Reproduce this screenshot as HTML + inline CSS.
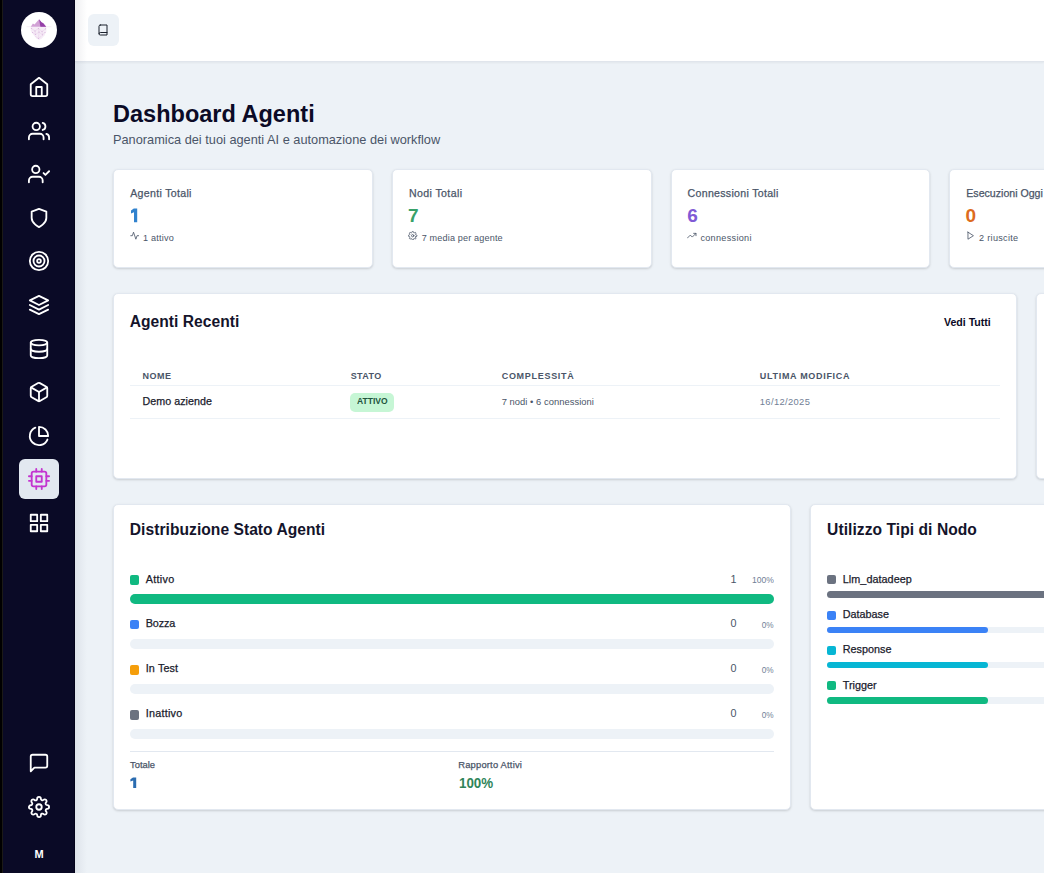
<!DOCTYPE html>
<html><head><meta charset="utf-8"><title>Dashboard Agenti</title>
<style>
html,body{margin:0;padding:0;}
body{width:1044px;height:873px;overflow:hidden;position:relative;background:#edf2f7;font-family:"Liberation Sans",sans-serif;}
.t{position:absolute;line-height:1;white-space:nowrap;}
.med{-webkit-text-stroke:0.25px currentColor;}
.abs{position:absolute;}
.side{position:absolute;left:0;top:0;width:75px;height:873px;background:#0a0a26;box-sizing:border-box;border-right:1px solid #04031a;z-index:2;}
.sshadow{position:absolute;left:75px;top:0;width:12px;height:873px;background:linear-gradient(to right,rgba(30,40,70,0.07),rgba(30,40,70,0));z-index:3;}
.strip{z-index:2;position:absolute;left:0;top:0;width:2px;height:873px;background:#000;}
.strip2{z-index:2;position:absolute;left:2px;top:0;width:1.3px;height:873px;background:#1b1a17;}
.ico{z-index:4;position:absolute;width:22px;height:22px;}
.ico svg{width:22px;height:22px;display:block;fill:none;stroke:#fff;stroke-width:2;stroke-linecap:round;stroke-linejoin:round;}
.logo{z-index:4;position:absolute;left:21px;top:12px;width:36px;height:36px;border-radius:50%;background:#fff;}
.active{z-index:3;position:absolute;left:19.1px;top:458.9px;width:40px;height:40px;border-radius:6px;background:#e2e8f0;}
.header{position:absolute;left:75px;top:0;width:969px;height:61px;background:#fff;border-bottom:1px solid #e0e5ec;box-shadow:0 1px 2px rgba(0,0,0,0.05);}
.hbtn{position:absolute;left:88px;top:14.2px;width:31px;height:31.5px;border-radius:6px;background:#edf2f7;}
.card{position:absolute;box-sizing:border-box;background:#fff;border-radius:5px;border:1px solid #e2e8f0;box-shadow:0 1px 3px rgba(0,0,0,0.1),0 1px 2px rgba(0,0,0,0.06);}
.line{position:absolute;height:1px;background:#edf2f7;}
.bar{position:absolute;border-radius:6px;background:#edf2f7;}
.fill{position:absolute;left:0;top:0;bottom:0;border-radius:6px;}
.sq{position:absolute;width:9.2px;height:9.6px;border-radius:2px;}
.sico{position:absolute;width:9.4px;height:9.4px;}
.sico svg{width:9.4px;height:9.4px;display:block;fill:none;stroke:#4a5568;stroke-width:2.1;stroke-linecap:round;stroke-linejoin:round;}
.badge{position:absolute;left:350px;top:393px;width:44px;height:18.8px;border-radius:5px;background:#c6f6d5;}
</style></head><body>
<div class="side"></div>
<div class="strip"></div><div class="strip2"></div>
<div class="logo">
 <svg width="36" height="36" viewBox="0 0 36 36">
  <line x1="5.5" y1="14.7" x2="30.5" y2="14.7" stroke="#efdcef" stroke-width="0.5"/>
  <polygon points="9.8,14.7 11.9,11.6 13.5,12.6 18.1,7.3 20.5,10.2 22.3,11.2 25.2,14.7" fill="#d2a2d6"/>
  <polygon points="18.1,7.3 20.5,10.2 22.3,11.2 25.2,14.7 19.4,14.7" fill="#9540a8"/>
  <polygon points="9.6,15.1 25.4,15.1 25.4,19.5 23.5,23.5 20.5,26.8 18.2,28 15.5,26.5 12.5,23 9.8,19" fill="#f6ecf7"/>
  <g stroke="#e2c6e5" stroke-width="0.45" fill="none"><path d="M10.5 16.5 L14 19 L17.5 16.5 L21 19.5 L24.5 16.8"/><path d="M11.5 20.5 L14.5 22.5 L18 20 L21.5 22.8 L24 20.5"/><path d="M14 24 L17.5 26.5 L20.5 24"/><path d="M14 19 L14.5 22.5 M17.5 16.5 L18 20 M21 19.5 L21.5 22.8 M17.5 26.5 L18 20"/></g>
  <g fill="#d9b6dd"><circle cx="14" cy="19" r="0.6"/><circle cx="17.5" cy="16.5" r="0.6"/><circle cx="21" cy="19.5" r="0.6"/><circle cx="24.5" cy="16.8" r="0.6"/><circle cx="10.5" cy="16.5" r="0.6"/><circle cx="14.5" cy="22.5" r="0.6"/><circle cx="18" cy="20" r="0.6"/><circle cx="21.5" cy="22.8" r="0.6"/><circle cx="17.5" cy="26.5" r="0.6"/><circle cx="11.5" cy="20.5" r="0.6"/><circle cx="24" cy="20.5" r="0.6"/></g>
 </svg>
</div>
<div class="ico" style="left:27.9px;top:75.70px"><svg viewBox="0 0 24 24"><path d="M3 9l9-7 9 7v11a2 2 0 0 1-2 2H5a2 2 0 0 1-2-2z"/><polyline points="9 22 9 12 15 12 15 22"/></svg></div>
<div class="ico" style="left:27.9px;top:119.75px"><svg viewBox="0 0 24 24"><path d="M17 21v-2a4 4 0 0 0-4-4H5a4 4 0 0 0-4 4v2"/><circle cx="9" cy="7" r="4"/><path d="M23 21v-2a4 4 0 0 0-3-3.87"/><path d="M16 3.13a4 4 0 0 1 0 7.75"/></svg></div>
<div class="ico" style="left:27.9px;top:162.75px"><svg viewBox="0 0 24 24"><path d="M16 21v-2a4 4 0 0 0-4-4H5a4 4 0 0 0-4 4v2"/><circle cx="8.5" cy="7" r="4"/><polyline points="17 11 19 13 23 9"/></svg></div>
<div class="ico" style="left:27.9px;top:206.80px"><svg viewBox="0 0 24 24"><path d="M12 22s8-4 8-10V5l-8-3-8 3v7c0 6 8 10 8 10z"/></svg></div>
<div class="ico" style="left:27.9px;top:249.80px"><svg viewBox="0 0 24 24"><circle cx="12" cy="12" r="10"/><circle cx="12" cy="12" r="6"/><circle cx="12" cy="12" r="2"/></svg></div>
<div class="ico" style="left:27.9px;top:293.70px"><svg viewBox="0 0 24 24"><polygon points="12 2 2 7 12 12 22 7 12 2"/><polyline points="2 17 12 22 22 17"/><polyline points="2 12 12 17 22 12"/></svg></div>
<div class="ico" style="left:27.9px;top:337.80px"><svg viewBox="0 0 24 24"><ellipse cx="12" cy="5" rx="9" ry="3"/><path d="M21 12c0 1.66-4 3-9 3s-9-1.34-9-3"/><path d="M3 5v14c0 1.66 4 3 9 3s9-1.34 9-3V5"/></svg></div>
<div class="ico" style="left:27.9px;top:380.80px"><svg viewBox="0 0 24 24"><path d="M21 16V8a2 2 0 0 0-1-1.73l-7-4a2 2 0 0 0-2 0l-7 4A2 2 0 0 0 3 8v8a2 2 0 0 0 1 1.73l7 4a2 2 0 0 0 2 0l7-4A2 2 0 0 0 21 16z"/><polyline points="3.27 6.96 12 12.01 20.73 6.96"/><line x1="12" y1="22.08" x2="12" y2="12"/></svg></div>
<div class="ico" style="left:27.9px;top:424.90px"><svg viewBox="0 0 24 24"><path d="M21.21 15.89A10 10 0 1 1 8 2.83"/><path d="M22 12A10 10 0 0 0 12 2v10z"/></svg></div>
<div class="active"></div>
<div class="ico" style="left:27.9px;top:467.70px"><svg viewBox="0 0 24 24" style="stroke:#c335d0"><rect x="4" y="4" width="16" height="16" rx="2" ry="2"/><rect x="9" y="9" width="6" height="6"/><line x1="9" y1="1" x2="9" y2="4"/><line x1="15" y1="1" x2="15" y2="4"/><line x1="9" y1="20" x2="9" y2="23"/><line x1="15" y1="20" x2="15" y2="23"/><line x1="20" y1="9" x2="23" y2="9"/><line x1="20" y1="14" x2="23" y2="14"/><line x1="1" y1="9" x2="4" y2="9"/><line x1="1" y1="14" x2="4" y2="14"/></svg></div>
<div class="ico" style="left:27.9px;top:511.80px"><svg viewBox="0 0 24 24"><rect x="3" y="3" width="7" height="7"/><rect x="14" y="3" width="7" height="7"/><rect x="14" y="14" width="7" height="7"/><rect x="3" y="14" width="7" height="7"/></svg></div>
<div class="ico" style="left:27.9px;top:751.70px"><svg viewBox="0 0 24 24"><path d="M21 15a2 2 0 0 1-2 2H7l-4 4V5a2 2 0 0 1 2-2h14a2 2 0 0 1 2 2z"/></svg></div>
<div class="ico" style="left:27.9px;top:795.90px"><svg viewBox="0 0 24 24"><circle cx="12" cy="12" r="3"/><path d="M19.4 15a1.65 1.65 0 0 0 .33 1.82l.06.06a2 2 0 0 1 0 2.83 2 2 0 0 1-2.83 0l-.06-.06a1.65 1.65 0 0 0-1.82-.33 1.65 1.65 0 0 0-1 1.51V21a2 2 0 0 1-2 2 2 2 0 0 1-2-2v-.09A1.65 1.65 0 0 0 9 19.4a1.65 1.65 0 0 0-1.820.33l-.06.06a2 2 0 0 1-2.83 0 2 2 0 0 1 0-2.83l.06-.06a1.65 1.65 0 0 0 .33-1.82 1.65 1.65 0 0 0-1.51-1H3a2 2 0 0 1-2-2 2 2 0 0 1 2-2h.09A1.65 1.65 0 0 0 4.6 9a1.65 1.65 0 0 0-.33-1.82l-.06-.06a2 2 0 0 1 0-2.830 2 2 0 0 1 2.83 0l.06.06a1.65 1.65 0 0 0 1.82.33H9a1.65 1.65 0 0 0 1-1.51V3a2 2 0 0 1 2-2 2 2 0 0 1 2 2v.09a1.65 1.65 0 0 0 1 1.51 1.65 1.65 0 0 0 1.82-.33l.06-.06a2 2 0 0 1 2.83 0 2 2 0 0 1 0 2.83l-.06.06a1.65 1.65 0 0 0-.33 1.82V9a1.65 1.65 0 0 0 1.51 1H21a2 2 0 0 1 2 2 2 2 0 0 1-2 2h-.09a1.65 1.65 0 0 0-1.51 1z"/></svg></div>
<div class="t" style="z-index:4;left:34.5px;top:848.5px;font-size:11px;font-weight:700;color:#fff;">M</div>

<div class="header"></div>
<div class="hbtn"><svg class="abs" style="left:8.6px;top:9.5px" width="12" height="12" viewBox="0 0 24 24" fill="none" stroke="#1a202c" stroke-width="2" stroke-linecap="round" stroke-linejoin="round"><path d="M4 19.5A2.5 2.5 0 0 1 6.5 17H20"/><path d="M6.5 2H20v20H6.5A2.5 2.5 0 0 1 4 19.5v-15A2.5 2.5 0 0 1 6.5 2z"/></svg></div>

<div class="sshadow"></div>
<!-- stat cards -->
<div class="card" style="left:113.3px;top:169.4px;width:259.4px;height:98.4px"></div>
<div class="card" style="left:392.0px;top:169.4px;width:260.4px;height:98.4px"></div>
<div class="card" style="left:670.7px;top:169.4px;width:259.2px;height:98.4px"></div>
<div class="card" style="left:949.4px;top:169.4px;width:259.4px;height:98.4px"></div>
<div class="sico" style="left:129.8px;top:231.2px"><svg viewBox="0 0 24 24"><polyline points="22 12 18 12 15 21 9 3 6 12 2 12"/></svg></div>
<div class="sico" style="left:408.3px;top:230.6px"><svg viewBox="0 0 24 24"><circle cx="12" cy="12" r="3"/><path d="M19.4 15a1.65 1.65 0 0 0 .33 1.82l.06.06a2 2 0 0 1 0 2.83 2 2 0 0 1-2.83 0l-.06-.06a1.65 1.65 0 0 0-1.82-.33 1.65 1.65 0 0 0-1 1.51V21a2 2 0 0 1-2 2 2 2 0 0 1-2-2v-.09A1.65 1.65 0 0 0 9 19.4a1.65 1.65 0 0 0-1.820.33l-.06.06a2 2 0 0 1-2.83 0 2 2 0 0 1 0-2.83l.06-.06a1.65 1.65 0 0 0 .33-1.82 1.65 1.65 0 0 0-1.51-1H3a2 2 0 0 1-2-2 2 2 0 0 1 2-2h.09A1.65 1.65 0 0 0 4.6 9a1.65 1.65 0 0 0-.33-1.82l-.06-.06a2 2 0 0 1 0-2.830 2 2 0 0 1 2.83 0l.06.06a1.65 1.65 0 0 0 1.82.33H9a1.65 1.65 0 0 0 1-1.51V3a2 2 0 0 1 2-2 2 2 0 0 1 2 2v.09a1.65 1.65 0 0 0 1 1.51 1.65 1.65 0 0 0 1.82-.33l.06-.06a2 2 0 0 1 2.83 0 2 2 0 0 1 0 2.83l-.06.06a1.65 1.65 0 0 0-.33 1.82V9a1.65 1.65 0 0 0 1.51 1H21a2 2 0 0 1 2 2 2 2 0 0 1-2 2h-.09a1.65 1.65 0 0 0-1.51 1z"/></svg></div>
<div class="sico" style="left:687.4px;top:231px"><svg viewBox="0 0 24 24"><polyline points="23 6 13.5 15.5 8.5 10.5 1 18"/><polyline points="17 6 23 6 23 12"/></svg></div>
<div class="sico" style="left:966.2px;top:231.2px"><svg viewBox="0 0 24 24"><polygon points="5 3 19 12 5 21 5 3"/></svg></div>

<!-- recent agents -->
<div class="card" style="left:113.3px;top:293.2px;width:903.6px;height:185.6px"></div>
<div class="card" style="left:1036.2px;top:293.4px;width:300px;height:185.2px"></div>
<div class="line" style="left:130px;top:385px;width:869.8px"></div>
<div class="line" style="left:130px;top:418px;width:869.8px"></div>
<div class="badge"></div>

<!-- distribution -->
<div class="card" style="left:113.3px;top:504.2px;width:677.6px;height:305.8px"></div>
<div class="card" style="left:809.8px;top:504.2px;width:400px;height:305.8px"></div>
<div class="sq" style="left:129.9px;top:575px;background:#10b981"></div>
<div class="bar" style="left:130px;top:594.1px;width:644.1px;height:9.9px"><div class="fill" style="width:100%;background:#10b981"></div></div>
<div class="sq" style="left:129.9px;top:619.9px;background:#3b82f6"></div>
<div class="bar" style="left:130px;top:639px;width:644.1px;height:9.9px"></div>
<div class="sq" style="left:129.9px;top:665px;background:#f59e0b"></div>
<div class="bar" style="left:130px;top:684px;width:644.1px;height:9.9px"></div>
<div class="sq" style="left:129.9px;top:710.2px;background:#6b7280"></div>
<div class="bar" style="left:130px;top:729.1px;width:644.1px;height:9.9px"></div>
<div class="line" style="left:130px;top:751px;width:644.1px;background:#e2e8f0"></div>

<!-- node usage -->
<div class="sq" style="left:827.3px;top:575.2px;width:8.6px;height:9.2px;background:#6b7280"></div>
<div class="bar" style="left:827.3px;top:591.1px;width:400px;height:6.9px"><div class="fill" style="width:100%;background:#6b7280"></div></div>
<div class="sq" style="left:827.3px;top:611px;width:8.6px;height:8.8px;background:#3b82f6"></div>
<div class="bar" style="left:827.3px;top:626.9px;width:400px;height:6.2px"><div class="fill" style="width:160.8px;background:#3b82f6"></div></div>
<div class="sq" style="left:827.3px;top:646px;width:8.6px;height:8.8px;background:#06b6d4"></div>
<div class="bar" style="left:827.3px;top:662px;width:400px;height:6.2px"><div class="fill" style="width:160.8px;background:#06b6d4"></div></div>
<div class="sq" style="left:827.3px;top:681px;width:8.6px;height:9.2px;background:#10b981"></div>
<div class="bar" style="left:827.3px;top:697.2px;width:400px;height:6.6px"><div class="fill" style="width:160.8px;background:#10b981"></div></div>

<svg class="abs" style="left:0;top:0" width="1044" height="873" viewBox="0 0 1044 873">
<polygon fill="#3182ce" points="133.8,208.6 137.2,208.6 137.2,222.2 134.0,222.2 134.0,212.2 131.0,213.4 131.0,210.6"/>
<polygon fill="#2b6cb0" points="133.0,777.6 136.2,777.6 136.2,788.1 133.2,788.1 133.2,780.6 130.4,781.6 130.4,779.3"/>
</svg>
<div class="t" style="left:113.00px;top:103.21px;font-size:23.5px;font-weight:700;color:#0b0a26;letter-spacing:0.012px;">Dashboard Agenti</div>
<div class="t" style="left:113.00px;top:133.81px;font-size:12.75px;font-weight:400;color:#4a5568;letter-spacing:0.008px;">Panoramica dei tuoi agenti AI e automazione dei workflow</div>
<div class="t med" style="left:130.20px;top:187.73px;font-size:10.6px;font-weight:400;color:#4a5568;letter-spacing:0.314px;">Agenti Totali</div>
<div class="t" style="left:143.00px;top:233.60px;font-size:9.1px;font-weight:400;color:#4a5568;letter-spacing:0.196px;">1 attivo</div>
<div class="t med" style="left:408.90px;top:187.73px;font-size:10.6px;font-weight:400;color:#4a5568;letter-spacing:0.392px;">Nodi Totali</div>
<div class="t" style="left:408.00px;top:205.92px;font-size:19px;font-weight:700;color:#38a169;">7</div>
<div class="t" style="left:421.70px;top:233.60px;font-size:9.1px;font-weight:400;color:#4a5568;letter-spacing:0.154px;">7 media per agente</div>
<div class="t med" style="left:687.60px;top:187.73px;font-size:10.6px;font-weight:400;color:#4a5568;letter-spacing:0.294px;">Connessioni Totali</div>
<div class="t" style="left:687.30px;top:205.92px;font-size:19px;font-weight:700;color:#805ad5;">6</div>
<div class="t" style="left:700.40px;top:233.60px;font-size:9.1px;font-weight:400;color:#4a5568;letter-spacing:0.307px;">connessioni</div>
<div class="t med" style="left:966.30px;top:187.73px;font-size:10.6px;font-weight:400;color:#4a5568;">Esecuzioni Oggi</div>
<div class="t" style="left:965.60px;top:205.92px;font-size:19px;font-weight:700;color:#dd6b20;">0</div>
<div class="t" style="left:979.10px;top:233.60px;font-size:9.1px;font-weight:400;color:#4a5568;letter-spacing:0.290px;">2 riuscite</div>
<div class="t" style="left:129.70px;top:314.29px;font-size:15.6px;font-weight:700;color:#14142b;letter-spacing:0.041px;">Agenti Recenti</div>
<div class="t" style="left:944.00px;top:316.73px;font-size:10.6px;font-weight:700;color:#0b0a26;letter-spacing:-0.010px;">Vedi Tutti</div>
<div class="t" style="left:142.50px;top:371.58px;font-size:9.0px;font-weight:700;color:#4a5568;letter-spacing:0.464px;">NOME</div>
<div class="t" style="left:350.70px;top:371.58px;font-size:9.0px;font-weight:700;color:#4a5568;letter-spacing:0.400px;">STATO</div>
<div class="t" style="left:501.70px;top:371.58px;font-size:9.0px;font-weight:700;color:#4a5568;letter-spacing:0.709px;">COMPLESSITÀ</div>
<div class="t" style="left:759.80px;top:371.58px;font-size:9.0px;font-weight:700;color:#4a5568;letter-spacing:0.693px;">ULTIMA MODIFICA</div>
<div class="t med" style="left:142.50px;top:395.84px;font-size:10.7px;font-weight:400;color:#1a202c;letter-spacing:0.043px;">Demo aziende</div>
<div class="t" style="left:356.50px;top:396.39px;font-size:9.7px;font-weight:700;color:#22543d;transform:scaleX(0.8790);transform-origin:0 0;">ATTIVO</div>
<div class="t" style="left:501.70px;top:396.94px;font-size:9.4px;font-weight:400;color:#4a5568;letter-spacing:0.039px;">7 nodi • 6 connessioni</div>
<div class="t" style="left:759.80px;top:396.94px;font-size:9.4px;font-weight:400;color:#718096;letter-spacing:0.353px;">16/12/2025</div>
<div class="t" style="left:129.80px;top:521.79px;font-size:15.6px;font-weight:700;color:#14142b;letter-spacing:0.042px;">Distribuzione Stato Agenti</div>
<div class="t med" style="left:145.70px;top:573.76px;font-size:10.8px;font-weight:400;color:#1a202c;letter-spacing:0.317px;">Attivo</div>
<div class="t" style="left:730.60px;top:573.76px;font-size:10.8px;font-weight:400;color:#4a5568;">1</div>
<div class="t" style="right:269.90px;top:574.94px;font-size:9.4px;font-weight:400;color:#718096;transform:scaleX(0.9173);transform-origin:100% 0;">100%</div>
<div class="t med" style="left:145.70px;top:617.96px;font-size:10.8px;font-weight:400;color:#1a202c;letter-spacing:-0.129px;">Bozza</div>
<div class="t" style="left:730.50px;top:617.96px;font-size:10.8px;font-weight:400;color:#4a5568;">0</div>
<div class="t" style="right:270.60px;top:620.34px;font-size:9.4px;font-weight:400;color:#718096;transform:scaleX(0.8774);transform-origin:100% 0;">0%</div>
<div class="t med" style="left:145.70px;top:662.66px;font-size:10.8px;font-weight:400;color:#1a202c;letter-spacing:0.129px;">In Test</div>
<div class="t" style="left:730.50px;top:662.66px;font-size:10.8px;font-weight:400;color:#4a5568;">0</div>
<div class="t" style="right:270.60px;top:665.04px;font-size:9.4px;font-weight:400;color:#718096;transform:scaleX(0.8774);transform-origin:100% 0;">0%</div>
<div class="t med" style="left:145.70px;top:707.86px;font-size:10.8px;font-weight:400;color:#1a202c;letter-spacing:0.241px;">Inattivo</div>
<div class="t" style="left:730.50px;top:707.86px;font-size:10.8px;font-weight:400;color:#4a5568;">0</div>
<div class="t" style="right:270.60px;top:710.24px;font-size:9.4px;font-weight:400;color:#718096;transform:scaleX(0.8774);transform-origin:100% 0;">0%</div>
<div class="t med" style="left:130.00px;top:760.04px;font-size:9.4px;font-weight:400;color:#4a5568;">Totale</div>
<div class="t med" style="left:458.20px;top:760.04px;font-size:9.4px;font-weight:400;color:#4a5568;letter-spacing:0.195px;">Rapporto Attivi</div>
<div class="t" style="left:458.60px;top:776.07px;font-size:14.8px;font-weight:700;color:#2f855a;transform:scaleX(0.9033);transform-origin:0 0;">100%</div>
<div class="t" style="left:827.10px;top:522.19px;font-size:15.6px;font-weight:700;color:#14142b;letter-spacing:0.055px;">Utilizzo Tipi di Nodo</div>
<div class="t med" style="left:842.80px;top:574.36px;font-size:10.8px;font-weight:400;color:#1a202c;letter-spacing:0.051px;">Llm_datadeep</div>
<div class="t med" style="left:842.80px;top:609.16px;font-size:10.8px;font-weight:400;color:#1a202c;">Database</div>
<div class="t med" style="left:842.80px;top:644.46px;font-size:10.8px;font-weight:400;color:#1a202c;">Response</div>
<div class="t med" style="left:842.80px;top:679.86px;font-size:10.8px;font-weight:400;color:#1a202c;">Trigger</div>
</body></html>
